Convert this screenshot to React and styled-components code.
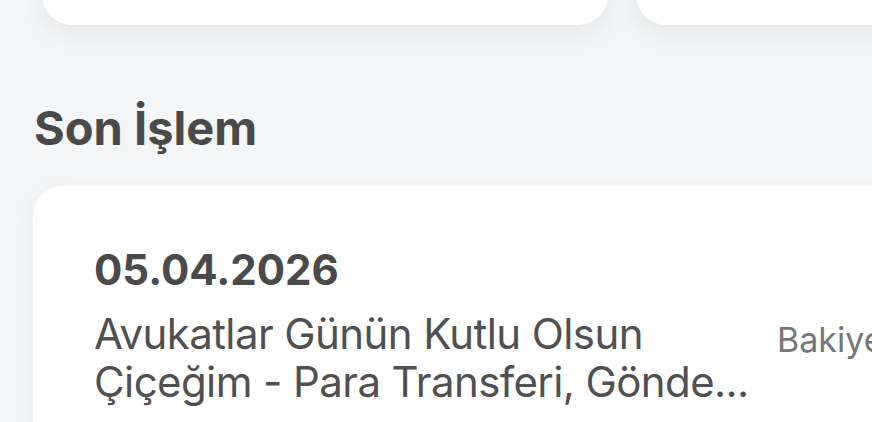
import React from 'react';
import styled, { createGlobalStyle } from 'styled-components';

const GlobalStyle = createGlobalStyle`
  html, body {
    margin: 0;
    padding: 0;
    background: #f5f6f8;
    overflow: hidden;
  }
  * { box-sizing: border-box; }
`;

const Screen = styled.div`
  width: 872px;
  height: 422px;
  overflow: hidden;
  background: #f5f6f8;
  font-family: Inter, "Noto Sans", sans-serif;
`;

// cards peeking out above the section
const TopRow = styled.div`
  display: flex;
  gap: 28px;
  margin-top: -75px;
  padding-left: 42px;
`;

const TopCard = styled.div`
  flex: 0 0 ${p => p.w}px;
  height: 100px;
  background: #fff;
  border-radius: 30px;
  box-shadow: 0 8px 24px rgba(0, 0, 0, 0.07);
`;

const SectionTitle = styled.h2`
  margin: 0;
  padding: 75px 0 0 34px;
  font-size: 47px;
  line-height: 56px;
  font-weight: 700;
  color: #4a4a4a;
`;

const TxCard = styled.div`
  margin: 30px 0 0 33px;
  width: 900px;
  height: 280px;
  background: #fff;
  border-radius: 30px;
  box-shadow: 0 6px 24px rgba(0, 0, 0, 0.05);
  padding: 59px 0 0 61px;
  display: flex;
`;

const TxInfo = styled.div`
  display: flex;
  flex-direction: column;
  flex: 0 0 683px;
`;

const TxDate = styled.div`
  font-size: 42px;
  line-height: 50px;
  font-weight: 700;
  color: #4a4a4a;
`;

const TxDesc = styled.div`
  margin-top: 15px;
  font-size: 42px;
  line-height: 48px;
  font-weight: 400;
  letter-spacing: -0.6px;
  color: #505050;
`;

const Balance = styled.div`
  margin-top: 75px;
  font-size: 34px;
  line-height: 40px;
  color: #76767a;
  white-space: nowrap;
`;

export default function App() {
  return (
    <Screen>
      <GlobalStyle />
      <TopRow>
        <TopCard w={566} />
        <TopCard w={300} />
      </TopRow>
      <SectionTitle>Son İşlem</SectionTitle>
      <TxCard>
        <TxInfo>
          <TxDate>05.04.2026</TxDate>
          <TxDesc>
            Avukatlar Günün Kutlu Olsun
            <br />
            Çiçeğim - Para Transferi, Gönde...
          </TxDesc>
        </TxInfo>
        <Balance>Bakiye</Balance>
      </TxCard>
    </Screen>
  );
}
